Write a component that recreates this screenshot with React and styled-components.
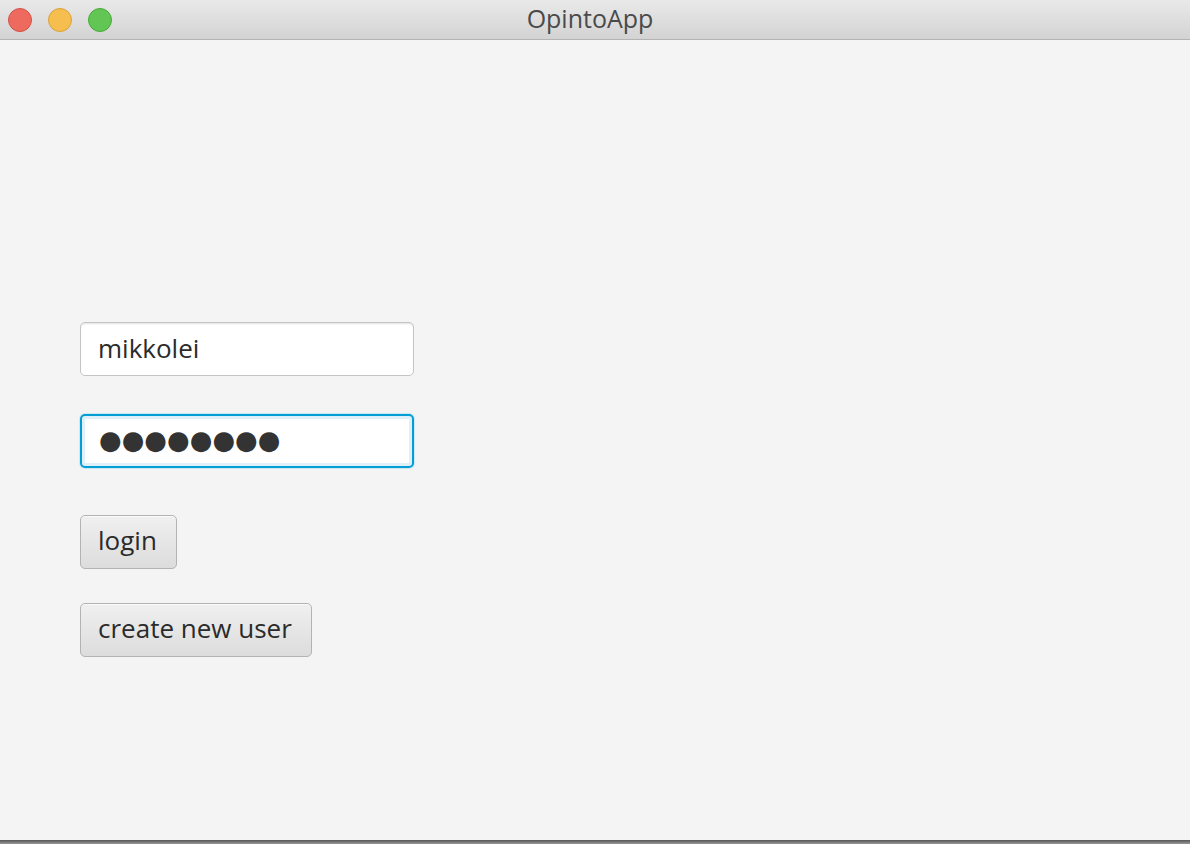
import React from "react";
import styled, { createGlobalStyle } from "styled-components";

const Global = createGlobalStyle`
  html, body { margin: 0; padding: 0; background: #f4f4f4; }
  body { font-family: "Open Sans", "Liberation Sans", sans-serif; }
`;

const Window = styled.div`
  width: 1190px;
  height: 844px;
  display: flex;
  flex-direction: column;
  background: #f4f4f4;
  overflow: hidden;
`;

const TitleBar = styled.div`
  height: 39px;
  flex: none;
  display: flex;
  align-items: center;
  position: relative;
  background: linear-gradient(#e9e9e9, #d3d3d3);
  border-bottom: 1px solid #b3b3b3;
`;

const Lights = styled.div`
  display: flex;
  gap: 16px;
  padding-left: 8px;
`;

const Light = styled.span`
  width: 24px;
  height: 24px;
  border-radius: 50%;
  box-sizing: border-box;
  background: ${(p) => p.$fill};
  border: 1px solid ${(p) => p.$edge};
`;

const Title = styled.div`
  position: absolute;
  left: 0;
  right: 0;
  top: 0;
  bottom: 0;
  display: flex;
  align-items: center;
  justify-content: center;
  font-size: 25px;
  color: #4a4a4a;
  padding: 0 10px 3px 0;
  box-sizing: border-box;
`;

const Content = styled.div`
  flex: 1;
  padding: 282px 0 0 80px;
  display: flex;
  flex-direction: column;
  align-items: flex-start;
`;

const Field = styled.div`
  box-sizing: border-box;
  width: 334px;
  height: 54px;
  border-radius: 5px;
  display: flex;
  align-items: center;
  padding: 0 0 3px 17px;
  font-size: 26px;
  color: #2b2b2b;
  background: #fff;
  border: ${(p) => (p.$focused ? "2px solid #039ed3" : "1px solid #c4c4c4")};
  box-shadow: ${(p) =>
    p.$focused
      ? "0 0 0 1px #cfe7f3, inset 0 0 0 3px #dff0f8"
      : "inset 0 2px 2px -1px rgba(0,0,0,0.12)"};
  margin-bottom: ${(p) => p.$mb}px;
`;

const Dots = styled.span`
  font-family: "DejaVu Sans", sans-serif;
  font-size: 26px;
  letter-spacing: 0;
  color: #333;
`;

const Button = styled.button`
  box-sizing: border-box;
  height: 54px;
  padding: 0 19px 4px 17px;
  border-radius: 5px;
  border: 1px solid #b3b3b3;
  background: linear-gradient(#f0f0f0, #dcdcdc);
  box-shadow: inset 0 1px 0 #fafafa;
  font-family: "Open Sans", "Liberation Sans", sans-serif;
  font-size: 26px;
  color: #2b2b2b;
  margin-bottom: ${(p) => p.$mb}px;
`;

const BottomEdge = styled.div`
  height: 4px;
  flex: none;
  background: linear-gradient(#555, #999);
`;

export default function App() {
  return (
    <>
      <Global />
      <Window>
        <TitleBar>
          <Lights>
            <Light $fill="#ee6a5f" $edge="#d25248" />
            <Light $fill="#f6be4f" $edge="#d9a23a" />
            <Light $fill="#62c654" $edge="#4ba93c" />
          </Lights>
          <Title>OpintoApp</Title>
        </TitleBar>
        <Content>
          <Field $mb={38}>mikkolei</Field>
          <Field $focused $mb={47}>
            <Dots>●●●●●●●●</Dots>
          </Field>
          <Button $mb={34}>login</Button>
          <Button>create new user</Button>
        </Content>
        <BottomEdge />
      </Window>
    </>
  );
}
